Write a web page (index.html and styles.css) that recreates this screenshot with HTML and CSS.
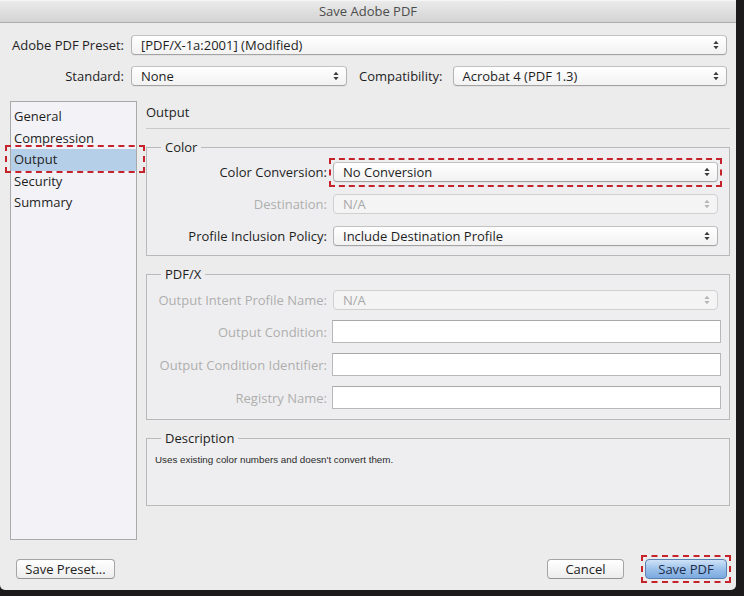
FILE: index.html
```html
<!DOCTYPE html>
<html lang="en">

<head>
    <meta charset="UTF-8">
    <meta name="viewport" content="width=device-width, initial-scale=1.0">
    <title>Save Adobe PDF</title>
    <link rel="stylesheet" href="styles.css">
</head>

<body>

    <div class="window">
        <div class="titlebar">Save Adobe PDF</div>

        <div class="dialog">
            <div class="row">
                <label class="row-label">Adobe PDF Preset:</label>
                <div class="select grow">
                    <span>[PDF/X-1a:2001] (Modified)</span>
                    <svg class="arrows" width="6" height="10" viewBox="0 0 6 10"><path d="M3 0.8L5.6 4H0.4Z M0.4 6H5.6L3 9.2Z"/></svg>
                </div>
            </div>

            <div class="row second">
                <label class="row-label">Standard:</label>
                <div class="select standard">
                    <span>None</span>
                    <svg class="arrows" width="6" height="10" viewBox="0 0 6 10"><path d="M3 0.8L5.6 4H0.4Z M0.4 6H5.6L3 9.2Z"/></svg>
                </div>
                <label class="compat-label">Compatibility:</label>
                <div class="select grow">
                    <span>Acrobat 4 (PDF 1.3)</span>
                    <svg class="arrows" width="6" height="10" viewBox="0 0 6 10"><path d="M3 0.8L5.6 4H0.4Z M0.4 6H5.6L3 9.2Z"/></svg>
                </div>
            </div>

            <div class="main">
                <ul class="sidebar">
                    <li>General</li>
                    <li>Compression</li>
                    <li class="active">Output</li>
                    <li>Security</li>
                    <li>Summary</li>
                </ul>

                <div class="panel">
                    <div class="panel-title">Output</div>

                    <fieldset class="group">
                        <legend>Color</legend>
                        <div class="field">
                            <label>Color Conversion:</label>
                            <div class="select marked">
                                <span>No Conversion</span>
                                <svg class="arrows" width="6" height="10" viewBox="0 0 6 10"><path d="M3 0.8L5.6 4H0.4Z M0.4 6H5.6L3 9.2Z"/></svg>
                            </div>
                        </div>
                        <div class="field disabled">
                            <label>Destination:</label>
                            <div class="select">
                                <span>N/A</span>
                                <svg class="arrows" width="6" height="10" viewBox="0 0 6 10"><path d="M3 0.8L5.6 4H0.4Z M0.4 6H5.6L3 9.2Z"/></svg>
                            </div>
                        </div>
                        <div class="field">
                            <label>Profile Inclusion Policy:</label>
                            <div class="select">
                                <span>Include Destination Profile</span>
                                <svg class="arrows" width="6" height="10" viewBox="0 0 6 10"><path d="M3 0.8L5.6 4H0.4Z M0.4 6H5.6L3 9.2Z"/></svg>
                            </div>
                        </div>
                    </fieldset>

                    <fieldset class="group pdfx">
                        <legend>PDF/X</legend>
                        <div class="field disabled">
                            <label>Output Intent Profile Name:</label>
                            <div class="select">
                                <span>N/A</span>
                                <svg class="arrows" width="6" height="10" viewBox="0 0 6 10"><path d="M3 0.8L5.6 4H0.4Z M0.4 6H5.6L3 9.2Z"/></svg>
                            </div>
                        </div>
                        <div class="field disabled">
                            <label>Output Condition:</label>
                            <div class="textbox"></div>
                        </div>
                        <div class="field disabled">
                            <label>Output Condition Identifier:</label>
                            <div class="textbox"></div>
                        </div>
                        <div class="field disabled">
                            <label>Registry Name:</label>
                            <div class="textbox"></div>
                        </div>
                    </fieldset>

                    <fieldset class="group description">
                        <legend>Description</legend>
                        <p>Uses existing color numbers and doesn't convert them.</p>
                    </fieldset>
                </div>
            </div>

            <div class="footer">
                <button class="preset">Save Preset...</button>
                <button class="cancel">Cancel</button>
                <button class="save">Save PDF</button>
            </div>
        </div>
    </div>

</body>

</html>
```

FILE: styles.css
```css
body {
    margin: 0;
    height: 596px;
    background-color: #1c1a1b;
    font-family: "Open Sans", "Liberation Sans", Arial, sans-serif;
    font-size: 13px;
    color: #1e1e1e;
}

.window {
    width: 736px;
    height: 590px;
    background-color: #ececec;
    border-radius: 0 0 5px 5px;
    overflow: hidden;
}

.titlebar {
    height: 22px;
    line-height: 22px;
    text-align: center;
    color: #4d4d4d;
    background: linear-gradient(#ececec, #d3d3d3);
    border-bottom: 1px solid #acacac;
    box-shadow: inset 0 1px 0 #f6f6f6;
}

.dialog {
    padding: 12px 6px 0 10px;
}

.row {
    display: flex;
    align-items: center;
    gap: 7px;
    margin-right: 3px;
}

.row.second {
    margin-top: 11px;
}

.row-label {
    width: 114px;
    display: flex;
    justify-content: flex-end;
    white-space: nowrap;
}

.compat-label {
    margin: 0 3px 0 5px;
}

/* popup buttons */
.select {
    position: relative;
    height: 20px;
    box-sizing: border-box;
    display: flex;
    align-items: center;
    justify-content: space-between;
    padding: 0 7px 0 9px;
    background: linear-gradient(#ffffff, #f2f2f2);
    border: 1px solid #b3b3b3;
    border-top-color: #c2c2c2;
    border-bottom-color: #a3a3a3;
    border-radius: 4px;
    box-shadow: 0 1px 0 rgba(0, 0, 0, 0.04);
}

.select .arrows {
    fill: #3c3c3c;
}

.grow {
    flex: 1;
}

.standard {
    width: 216px;
}

.main {
    display: flex;
    gap: 9px;
    margin-top: 15px;
    height: 439px;
}

.sidebar {
    list-style: none;
    margin: 0;
    padding: 4px 0 0;
    width: 127px;
    box-sizing: border-box;
    background-color: #f3f3f7;
    border: 1px solid #a9a9a9;
}

.sidebar li {
    position: relative;
    height: 21.6px;
    line-height: 21.6px;
    padding-left: 3px;
}

.sidebar li.active {
    background-color: #b6cfe9;
}

/* red dashed annotation boxes */
.sidebar li.active::after,
.select.marked::after,
button.save::after {
    content: "";
    position: absolute;
    border: 2px dashed #c4232c;
}

.sidebar li.active::after {
    top: -4px;
    left: -6px;
    right: -9px;
    bottom: -2px;
}

.select.marked::after {
    top: -5px;
    left: -5px;
    right: -5px;
    bottom: -6px;
}

button.save::after {
    top: -5px;
    left: -5px;
    right: -5px;
    bottom: -5px;
}

.panel {
    flex: 1;
    min-width: 0;
}

.panel-title {
    padding: 3px 0 8px;
    line-height: 16px;
    border-bottom: 1px solid #c9c9c9;
}

.group {
    margin: 10px 0 0;
    padding: 7px 11px 9px 8px;
    border: 1px solid #b9b9b9;
    background-color: #eeeef0;
    min-width: 0;
}

.group legend {
    margin-left: 6px;
    padding: 0 4px;
    line-height: 16px;
}

.field {
    display: flex;
    align-items: center;
}

.field + .field {
    margin-top: 12px;
}

.field label {
    flex: none;
    width: 172px;
    margin-right: 6px;
    display: flex;
    justify-content: flex-end;
    white-space: nowrap;
}

.field .select {
    flex: 1;
}

.field.disabled label {
    color: #aeaeae;
}

.field.disabled .select {
    color: #a8a8a8;
    background: #f4f4f4;
    border-color: #d0d0d0;
    box-shadow: none;
}

.field.disabled .select .arrows {
    fill: #b5b5b5;
}

.pdfx {
    padding-top: 8px;
    padding-bottom: 10px;
}

.pdfx .field + .field {
    margin-top: 10px;
}

.textbox {
    flex: 1;
    height: 23px;
    box-sizing: border-box;
    margin: 0 -3px 0 -1px;
    background-color: #ffffff;
    border: 1px solid #b8b8b8;
    border-top-color: #a8a8a8;
}

.description {
    padding: 7px 8px 0;
}

.description p {
    margin: 0;
    height: 52px;
    font-family: "Liberation Sans", Arial, sans-serif;
    font-size: 9.8px;
    line-height: 13px;
    color: #2a2a2a;
}

.footer {
    display: flex;
    align-items: center;
    margin-top: 19px;
}

button {
    position: relative;
    height: 20px;
    padding: 0;
    font-family: "Open Sans", "Liberation Sans", Arial, sans-serif;
    font-size: 13px;
    color: #222;
    background: linear-gradient(#ffffff, #ededed);
    border: 1px solid #a5a5a5;
    border-bottom-color: #939393;
    border-radius: 4px;
    cursor: pointer;
}

button.preset {
    width: 99px;
    margin-left: 6px;
}

button.cancel {
    width: 77px;
    margin-left: auto;
}

button.save {
    width: 82px;
    margin: 0 3px 0 21px;
    color: #1d2d4c;
    background: linear-gradient(#cfe2f7, #9cc1ea 50%, #7aa9df);
    border-color: #5a80b3;
}
```
